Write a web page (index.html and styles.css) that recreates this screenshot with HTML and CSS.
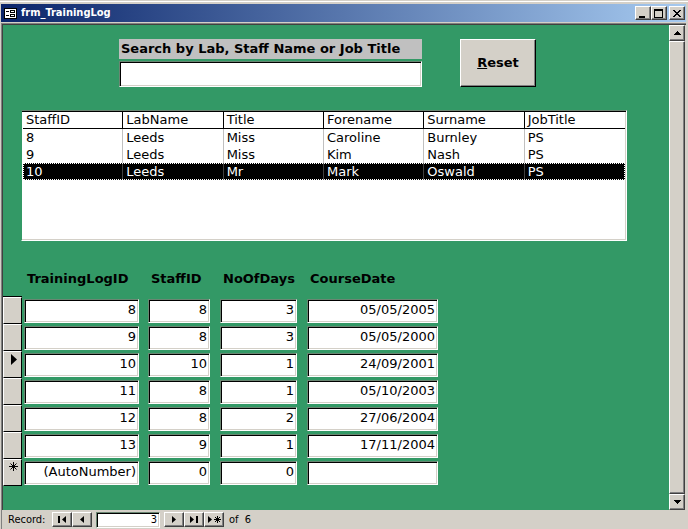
FILE: index.html
```html
<!DOCTYPE html>
<html lang="en">
<head>
    <meta charset="UTF-8">
    <meta name="viewport" content="width=device-width, initial-scale=1.0">
    <title>frm_TrainingLog</title>
    <link rel="stylesheet" href="styles.css">
</head>
<body>
    <div class="window">
        <header class="title-bar">
            <svg class="form-icon" width="13" height="11" viewBox="0 0 13 11" shape-rendering="crispEdges" aria-hidden="true">
                <path fill="#000" d="M0 0h13v11H0z"/>
                <path fill="#fff" d="M1 1h11v9H1z"/>
                <path fill="#000" d="M2 3h3v1H2zM2 7h3v1H2zM6 2h5v3H6zM6 6h5v3H6z"/>
                <path fill="#fff" d="M7 3h3v1H7zM7 7h3v1H7z"/>
            </svg>
            <h1>frm_TrainingLog</h1>
            <div class="window-buttons">
                <button type="button" class="caption-button" aria-label="Minimize">
                    <svg width="10" height="9" viewBox="0 0 10 9" shape-rendering="crispEdges"><path d="M1 7h6v2H1z"/></svg>
                </button>
                <button type="button" class="caption-button" aria-label="Maximize">
                    <svg width="10" height="9" viewBox="0 0 10 9" shape-rendering="crispEdges"><path fill-rule="evenodd" d="M0 0h9v9H0zM1 2v6h7V2z"/></svg>
                </button>
                <button type="button" class="caption-button close" aria-label="Close">
                    <svg width="10" height="9" viewBox="0 0 10 9" shape-rendering="crispEdges"><path d="M1 1h2v1H1zM7 1h2v1H7zM2 2h2v1H2zM6 2h2v1H6zM3 3h4v1H3zM4 4h2v1H4zM3 5h4v1H3zM2 6h2v1H2zM6 6h2v1H6zM1 7h2v1H1zM7 7h2v1H7z"/></svg>
                </button>
            </div>
        </header>

        <div class="client">
            <div class="form-area">
                <main class="form">
                    <div class="search">
                        <div class="search-field">
                            <label for="search">Search by Lab, Staff Name or Job Title</label>
                            <input type="text" id="search" class="field">
                        </div>
                        <button type="button" class="reset" accesskey="r"><span><u>R</u>eset</span></button>
                    </div>

                    <div class="staff-list field">
                        <table>
                            <thead>
                                <tr><th>StaffID</th><th>LabName</th><th>Title</th><th>Forename</th><th>Surname</th><th>JobTitle</th></tr>
                            </thead>
                            <tbody>
                                <tr><td>8</td><td>Leeds</td><td>Miss</td><td>Caroline</td><td>Burnley</td><td>PS</td></tr>
                                <tr><td>9</td><td>Leeds</td><td>Miss</td><td>Kim</td><td>Nash</td><td>PS</td></tr>
                                <tr class="selected"><td>10</td><td>Leeds</td><td>Mr</td><td>Mark</td><td>Oswald</td><td>PS</td></tr>
                            </tbody>
                        </table>
                    </div>

                    <table class="training-log">
                        <colgroup>
                            <col class="col-selector"><col class="col-log"><col class="col-staff"><col class="col-days"><col class="col-date">
                        </colgroup>
                        <thead>
                            <tr>
                                <td></td>
                                <th id="log">TrainingLogID</th>
                                <th id="staff">StaffID</th>
                                <th id="days">NoOfDays</th>
                                <th id="date">CourseDate</th>
                            </tr>
                        </thead>
                        <tbody>
                            <tr>
                                <td class="selector"></td>
                                <td><input class="field" aria-labelledby="log" value="8"></td>
                                <td><input class="field" aria-labelledby="staff" value="8"></td>
                                <td><input class="field" aria-labelledby="days" value="3"></td>
                                <td><input class="field" aria-labelledby="date" value="05/05/2005"></td>
                            </tr>
                            <tr>
                                <td class="selector"></td>
                                <td><input class="field" aria-labelledby="log" value="9"></td>
                                <td><input class="field" aria-labelledby="staff" value="8"></td>
                                <td><input class="field" aria-labelledby="days" value="3"></td>
                                <td><input class="field" aria-labelledby="date" value="05/05/2000"></td>
                            </tr>
                            <tr>
                                <td class="selector">
                                    <svg width="9" height="11" viewBox="0 0 9 11" aria-label="Current record"><path d="M2 0l6 5.5L2 11z"/></svg>
                                </td>
                                <td><input class="field" aria-labelledby="log" value="10"></td>
                                <td><input class="field" aria-labelledby="staff" value="10"></td>
                                <td><input class="field" aria-labelledby="days" value="1"></td>
                                <td><input class="field" aria-labelledby="date" value="24/09/2001"></td>
                            </tr>
                            <tr>
                                <td class="selector"></td>
                                <td><input class="field" aria-labelledby="log" value="11"></td>
                                <td><input class="field" aria-labelledby="staff" value="8"></td>
                                <td><input class="field" aria-labelledby="days" value="1"></td>
                                <td><input class="field" aria-labelledby="date" value="05/10/2003"></td>
                            </tr>
                            <tr>
                                <td class="selector"></td>
                                <td><input class="field" aria-labelledby="log" value="12"></td>
                                <td><input class="field" aria-labelledby="staff" value="8"></td>
                                <td><input class="field" aria-labelledby="days" value="2"></td>
                                <td><input class="field" aria-labelledby="date" value="27/06/2004"></td>
                            </tr>
                            <tr>
                                <td class="selector"></td>
                                <td><input class="field" aria-labelledby="log" value="13"></td>
                                <td><input class="field" aria-labelledby="staff" value="9"></td>
                                <td><input class="field" aria-labelledby="days" value="1"></td>
                                <td><input class="field" aria-labelledby="date" value="17/11/2004"></td>
                            </tr>
                            <tr>
                                <td class="selector">
                                    <svg width="9" height="9" viewBox="0 0 9 9" aria-label="New record"><path stroke="#000" d="M4.5 0v9M0 4.5h9M1.5 1.5l6 6M7.5 1.5l-6 6"/></svg>
                                </td>
                                <td><input class="field" aria-labelledby="log" value="(AutoNumber)"></td>
                                <td><input class="field" aria-labelledby="staff" value="0"></td>
                                <td><input class="field" aria-labelledby="days" value="0"></td>
                                <td><input class="field" aria-labelledby="date" value=""></td>
                            </tr>
                        </tbody>
                    </table>
                </main>

                <div class="scrollbar">
                    <button type="button" class="scroll-button" aria-label="Scroll up">
                        <svg width="7" height="4" viewBox="0 0 7 4" shape-rendering="crispEdges"><path d="M3 0h1v1H3zM2 1h3v1H2zM1 2h5v1H1zM0 3h7v1H0z"/></svg>
                    </button>
                    <div class="scroll-thumb"></div>
                    <button type="button" class="scroll-button" aria-label="Scroll down">
                        <svg width="7" height="4" viewBox="0 0 7 4" shape-rendering="crispEdges"><path d="M0 0h7v1H0zM1 1h5v1H1zM2 2h3v1H2zM3 3h1v1H3z"/></svg>
                    </button>
                </div>
            </div>

            <nav class="record-nav">
                <label for="record">Record:</label>
                <div class="nav-buttons">
                    <button type="button" class="nav-button" aria-label="First record">
                        <svg width="9" height="7" viewBox="0 0 9 7"><path d="M0 0h2v7H0zM8 0v7L4 3.5z"/></svg>
                    </button>
                    <button type="button" class="nav-button" aria-label="Previous record">
                        <svg width="4" height="7" viewBox="0 0 4 7"><path d="M4 0v7L0 3.5z"/></svg>
                    </button>
                </div>
                <input type="text" id="record" class="field record-number" value="3">
                <div class="nav-buttons">
                    <button type="button" class="nav-button" aria-label="Next record">
                        <svg width="4" height="7" viewBox="0 0 4 7"><path d="M0 0v7l4-3.5z"/></svg>
                    </button>
                    <button type="button" class="nav-button" aria-label="Last record">
                        <svg width="9" height="7" viewBox="0 0 9 7"><path d="M0 0v7l4-3.5zM6 0h2v7H6z"/></svg>
                    </button>
                    <button type="button" class="nav-button" aria-label="New record">
                        <svg width="13" height="7" viewBox="0 0 13 7"><path d="M0 0v7l4-3.5z"/><path stroke="#000" d="M9.5 0v7M6 3.5h7M7 1l5 5M12 1L7 6"/></svg>
                    </button>
                </div>
                <span class="record-count">of&nbsp; 6</span>
            </nav>
        </div>
    </div>
</body>
</html>
```
FILE: styles.css
```css
* {
    box-sizing: border-box;
}

body {
    margin: 0;
    font-family: "DejaVu Sans", Verdana, sans-serif;
    font-size: 13px;
    color: #000;
    background-color: #d4d0c8;
}

button,
input {
    margin: 0;
    padding: 0;
    font: inherit;
    color: inherit;
    border-radius: 0;
    outline: none;
}

svg {
    display: block;
}

.window {
    display: flex;
    flex-direction: column;
    min-height: 100vh;
    padding: 1px 2px 0 1px;
    border-top: 1px solid #d4d0c8;
    box-shadow: inset 0 1px 0 #fff;
}

/* title bar */
.title-bar {
    display: flex;
    align-items: center;
    height: 18px;
    margin-top: 2px;
    padding: 0 1px 0 3px;
    background: linear-gradient(to right, #0a246a, #a6caf0);
}

.title-bar h1 {
    flex: 1;
    margin: 0 0 0 4px;
    font-family: "DejaVu Sans Condensed", "DejaVu Sans", Tahoma, sans-serif;
    font-size: 11px;
    font-weight: bold;
    line-height: 18px;
    color: #fff;
}

.window-buttons {
    display: flex;
}

.caption-button,
.scroll-button,
.nav-button {
    display: flex;
    align-items: center;
    justify-content: center;
    width: 16px;
    height: 14px;
    background-color: #d4d0c8;
    border: 1px solid;
    border-color: #fff #404040 #404040 #fff;
    box-shadow: inset -1px -1px 0 #808080;
}

.close {
    margin-left: 2px;
}

/* form */
.client {
    display: flex;
    flex: 1;
    flex-direction: column;
    margin-top: 1px;
    border: 1px solid #808080;
    border-width: 1px 0 0 1px;
}

.form-area {
    display: flex;
    flex: 1;
    border: 1px solid #404040;
    border-width: 1px 0 0 1px;
}

.form {
    flex: 1;
    background-color: #339966;
}

.field {
    background-color: #fff;
    border: 1px solid;
    border-color: #6a8672 #fff #fff #6a8672;
    box-shadow: inset 1px 1px 0 #000, inset -1px -1px 0 #d4d0c8;
}

.search {
    display: flex;
    gap: 38px;
    padding: 14px 20px 0 116px;
}

.search-field {
    display: flex;
    flex-direction: column;
    gap: 2px;
    width: 303px;
}

.search label {
    height: 20px;
    padding-left: 2px;
    font-weight: bold;
    line-height: 19px;
    background-color: #c0c0c0;
    white-space: nowrap;
}

.search .field {
    height: 26px;
    padding: 0 4px;
}

.reset {
    width: 76px;
    height: 48px;
    padding-bottom: 2px;
    font-weight: bold;
    background-color: #d4d0c8;
    border: 1px solid;
    border-color: #fff #000 #000 #fff;
    box-shadow: inset -1px -1px 0 #808080;
}

.staff-list {
    width: 606px;
    height: 131px;
    margin: 23px 0 0 18px;
    padding: 1px;
    border-left-color: #339966;
    box-shadow: inset 0 1px 0 #000, inset -1px -1px 0 #d4d0c8;
}

.staff-list table {
    width: 100%;
    table-layout: fixed;
    border-spacing: 0;
}

.staff-list th,
.staff-list td {
    height: 17px;
    padding: 0 3px;
    font-weight: normal;
    line-height: 16px;
    text-align: left;
    border-right: 1px solid #c0c0c0;
}

.staff-list th {
    border-right-color: #000;
    border-bottom: 1px solid #000;
}

.staff-list th:last-child,
.staff-list td:last-child {
    border-right: none;
}

.staff-list .selected {
    color: #fff;
    background-color: #000;
    outline: 1px dotted #fff;
    outline-offset: -1px;
}

.staff-list .selected td {
    border-right-color: #404040;
}

/* training records */
.training-log {
    width: 440px;
    margin-top: 29px;
    table-layout: fixed;
    border-spacing: 0;
}

.col-selector {
    width: 19px;
}

.col-log {
    width: 121px;
}

.col-staff {
    width: 72px;
}

.col-days {
    width: 87px;
}

.col-date {
    width: 141px;
}

.training-log th {
    height: 27px;
    padding: 0 0 0 8px;
    line-height: 18px;
    text-align: left;
    vertical-align: top;
}

.training-log th:nth-child(2) {
    padding-left: 5px;
}

.training-log thead td {
    padding: 0;
    border-bottom: 1px solid #000;
}

.training-log tbody td {
    height: 27px;
    padding: 0 5px;
}

.training-log tbody td:nth-child(2) {
    padding: 0 4px 0 2px;
}

.training-log .field {
    display: block;
    width: 100%;
    height: 24px;
    padding: 0 2px 3px;
    text-align: right;
}

.training-log tbody .selector {
    padding: 2px 3px 0 5px;
    vertical-align: top;
    background-color: #d4d0c8;
    border: 1px solid;
    border-color: #fff #000 #000 #fff;
}

/* scrollbar */
.scrollbar {
    display: flex;
    flex-direction: column;
    width: 16px;
    margin-right: 1px;
}

.scroll-button {
    height: 16px;
}

.scroll-thumb {
    flex: 1;
    background-color: #d4d0c8;
    border: 1px solid;
    border-color: #fff #404040 #404040 #fff;
    box-shadow: inset -1px -1px 0 #808080;
}

/* record navigation */
.record-nav {
    display: flex;
    align-items: center;
    height: 19px;
    padding-left: 6px;
    font-family: "DejaVu Sans Condensed", "DejaVu Sans", Tahoma, sans-serif;
    font-size: 11px;
}

.record-nav label {
    width: 44px;
}

.nav-buttons {
    display: flex;
}

.nav-button {
    width: 20px;
    height: 15px;
}

.record-number {
    width: 64px;
    height: 16px;
    margin: 0 4px;
    padding-right: 2px;
    text-align: right;
}

.record-count {
    margin-left: 5px;
}
```
